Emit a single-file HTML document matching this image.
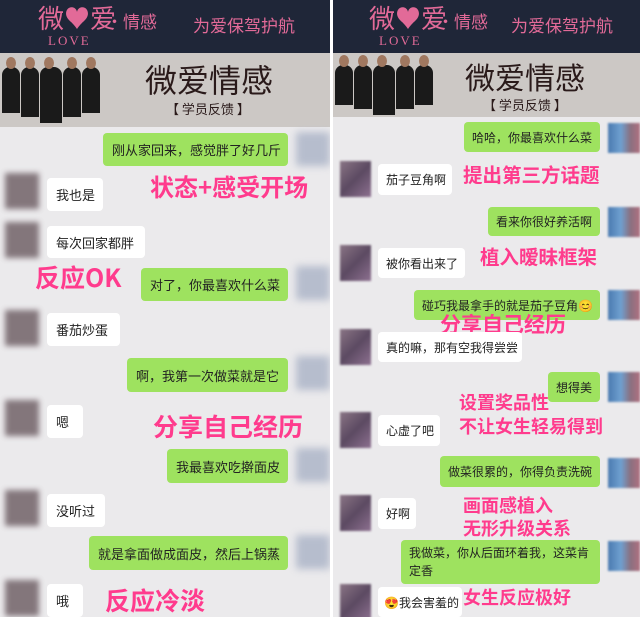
<!DOCTYPE html>
<html><head><meta charset="utf-8"><style>
*{margin:0;padding:0;box-sizing:border-box}
body{width:640px;height:617px;overflow:hidden;background:#fff;position:relative;font-family:"Liberation Sans","Noto Sans CJK SC",sans-serif}
.p{position:absolute;top:0;height:617px;overflow:hidden;background:#ebeaec}
.hd{position:absolute;left:0;right:0;top:0;height:53px;background:#1f2638}
.bn{position:absolute;left:0;right:0;top:53px;background:#ccc8c5}
.a{position:absolute}
.b{position:absolute;border-radius:4px;font-size:12px;color:#222;padding:0 8px;display:flex;align-items:center;white-space:nowrap}
.p1 .b{font-size:13px;padding:0 9px}
.w{background:#fff}
.g{background:#9ee25f}
.l{position:absolute;color:#ff3b8d;font-weight:bold;white-space:nowrap;font-family:"Noto Sans CJK SC",sans-serif;line-height:1.1}
.av{position:absolute;width:34px;height:36px;background:#6a5a60;filter:blur(3px);opacity:.8}
.avr{position:absolute;width:34px;height:34px;background:#a9b2c6;filter:blur(4px);opacity:.8}
.av2{position:absolute;width:31px;height:36px;background:linear-gradient(135deg,#8a7585,#5c4a62 50%,#8d7090);filter:blur(1px)}
.avr2{position:absolute;width:32px;height:30px;background:linear-gradient(90deg,#4a7ab0,#6fa0d0 40%,#8a7080 70%,#b07080);filter:blur(1px)}
.logo{position:absolute;color:#e26a98;font-family:"Noto Sans CJK SC",sans-serif;line-height:1}
.men{position:absolute;bottom:0;display:flex;gap:1px}
.men div{width:18px;background:#1a1a1a;border-radius:8px 8px 0 0;position:relative}
.men div:before{content:"";position:absolute;left:4px;top:-10px;width:10px;height:12px;border-radius:50%;background:#a07860}
</style></head><body>

<!-- LEFT PANEL -->
<div class="p p1" style="left:0;width:330px">
 <div class="hd">
  <div class="logo" style="left:38px;top:5px;font-size:26px">微♥爱</div>
  <div class="logo" style="left:48px;top:34px;font-size:13px;font-family:'Liberation Serif',serif;letter-spacing:2px">LOVE</div>
  <div class="logo" style="left:106px;top:12px;font-size:17px">·情感</div>
  <div class="logo" style="left:193px;top:16px;font-size:17px">为爱保驾护航</div>
 </div>
 <div class="bn" style="height:74px">
  <div class="men" style="left:2px;height:60px"><div style="height:46px"></div><div style="height:50px"></div><div style="height:56px;width:22px"></div><div style="height:50px"></div><div style="height:46px"></div></div>
  <div class="a" style="left:145px;top:8px;font-size:32px;color:#2a1a1a;font-family:'Noto Sans CJK SC',sans-serif;line-height:36px">微爱情感</div>
  <div class="a" style="left:166px;top:46px;font-size:13px;color:#2a1a1a;font-family:'Noto Sans CJK SC',sans-serif">【 学员反馈 】</div>
 </div>

 <div class="avr" style="left:296px;top:132px"></div>
 <div class="b g" style="left:103px;top:133px;width:185px;height:33px">刚从家回来，感觉胖了好几斤</div>
 <div class="av" style="left:5px;top:173px"></div>
 <div class="b w" style="left:47px;top:178px;width:56px;height:33px">我也是</div>
 <div class="l" style="left:150px;top:173px;font-size:24px">状态+感受开场</div>
 <div class="av" style="left:5px;top:222px"></div>
 <div class="b w" style="left:47px;top:226px;width:98px;height:32px">每次回家都胖</div>
 <div class="l" style="left:35px;top:264px;font-size:25px">反应OK</div>
 <div class="avr" style="left:296px;top:266px"></div>
 <div class="b g" style="left:141px;top:268px;width:147px;height:33px">对了，你最喜欢什么菜</div>
 <div class="av" style="left:5px;top:310px"></div>
 <div class="b w" style="left:47px;top:313px;width:73px;height:33px">番茄炒蛋</div>
 <div class="avr" style="left:296px;top:356px"></div>
 <div class="b g" style="left:127px;top:358px;width:161px;height:34px">啊，我第一次做菜就是它</div>
 <div class="av" style="left:5px;top:400px"></div>
 <div class="b w" style="left:47px;top:405px;width:36px;height:33px">嗯</div>
 <div class="l" style="left:153px;top:413px;font-size:25px">分享自己经历</div>
 <div class="avr" style="left:296px;top:448px"></div>
 <div class="b g" style="left:167px;top:449px;width:121px;height:34px">我最喜欢吃擀面皮</div>
 <div class="av" style="left:5px;top:490px"></div>
 <div class="b w" style="left:47px;top:494px;width:58px;height:33px">没听过</div>
 <div class="avr" style="left:296px;top:535px"></div>
 <div class="b g" style="left:89px;top:536px;width:199px;height:34px">就是拿面做成面皮，然后上锅蒸</div>
 <div class="av" style="left:5px;top:580px"></div>
 <div class="b w" style="left:47px;top:584px;width:36px;height:33px">哦</div>
 <div class="l" style="left:105px;top:587px;font-size:25px">反应冷淡</div>
</div>

<!-- RIGHT PANEL -->
<div class="p" style="left:333px;width:307px">
 <div class="hd">
  <div class="logo" style="left:36px;top:5px;font-size:26px">微♥爱</div>
  <div class="logo" style="left:46px;top:34px;font-size:13px;font-family:'Liberation Serif',serif;letter-spacing:2px">LOVE</div>
  <div class="logo" style="left:104px;top:12px;font-size:17px">·情感</div>
  <div class="logo" style="left:178px;top:16px;font-size:17px">为爱保驾护航</div>
 </div>
 <div class="bn" style="height:64px">
  <div class="men" style="left:2px;height:52px"><div style="height:40px"></div><div style="height:44px"></div><div style="height:50px;width:22px"></div><div style="height:44px"></div><div style="height:40px"></div></div>
  <div class="a" style="left:132px;top:6px;font-size:30px;color:#2a1a1a;font-family:'Noto Sans CJK SC',sans-serif;line-height:34px">微爱情感</div>
  <div class="a" style="left:150px;top:42px;font-size:13px;color:#2a1a1a;font-family:'Noto Sans CJK SC',sans-serif">【 学员反馈 】</div>
 </div>

 <div class="avr2" style="left:275px;top:123px"></div>
 <div class="b g" style="left:131px;top:122px;width:136px;height:30px">哈哈，你最喜欢什么菜</div>
 <div class="av2" style="left:7px;top:161px"></div>
 <div class="b w" style="left:45px;top:164px;width:74px;height:31px">茄子豆角啊</div>
 <div class="l" style="left:130px;top:163px;font-size:19.5px">提出第三方话题</div>
 <div class="avr2" style="left:275px;top:207px"></div>
 <div class="b g" style="left:155px;top:207px;width:112px;height:29px">看来你很好养活啊</div>
 <div class="av2" style="left:7px;top:245px"></div>
 <div class="b w" style="left:45px;top:248px;width:87px;height:30px">被你看出来了</div>
 <div class="l" style="left:147px;top:245px;font-size:19.5px">植入暧昧框架</div>
 <div class="avr2" style="left:275px;top:290px"></div>
 <div class="b g" style="left:81px;top:290px;width:186px;height:30px">碰巧我最拿手的就是茄子豆角😊</div>
 <div class="l" style="left:107px;top:313px;font-size:21px">分享自己经历</div>
 <div class="av2" style="left:7px;top:329px"></div>
 <div class="b w" style="left:45px;top:332px;width:144px;height:30px">真的嘛，那有空我得尝尝</div>
 <div class="avr2" style="left:275px;top:372px"></div>
 <div class="b g" style="left:215px;top:372px;width:52px;height:30px">想得美</div>
 <div class="l" style="left:126px;top:393px;font-size:18px">设置奖品性</div>
 <div class="l" style="left:126px;top:417px;font-size:18px">不让女生轻易得到</div>
 <div class="av2" style="left:7px;top:412px"></div>
 <div class="b w" style="left:45px;top:415px;width:62px;height:31px">心虚了吧</div>
 <div class="avr2" style="left:275px;top:458px"></div>
 <div class="b g" style="left:107px;top:456px;width:160px;height:31px">做菜很累的，你得负责洗碗</div>
 <div class="l" style="left:130px;top:496px;font-size:18px">画面感植入</div>
 <div class="l" style="left:130px;top:519px;font-size:18px">无形升级关系</div>
 <div class="av2" style="left:7px;top:495px"></div>
 <div class="b w" style="left:45px;top:498px;width:38px;height:31px">好啊</div>
 <div class="avr2" style="left:275px;top:541px"></div>
 <div class="b g" style="left:68px;top:540px;width:199px;height:44px;white-space:normal;line-height:18px;padding:0 8px">我做菜，你从后面环着我，这菜肯定香</div>
 <div class="av2" style="left:7px;top:584px"></div>
 <div class="b w" style="left:45px;top:587px;width:84px;height:30px;padding:0 6px">😍我会害羞的</div>
 <div class="l" style="left:130px;top:588px;font-size:18px">女生反应极好</div>
</div>
</body></html>
